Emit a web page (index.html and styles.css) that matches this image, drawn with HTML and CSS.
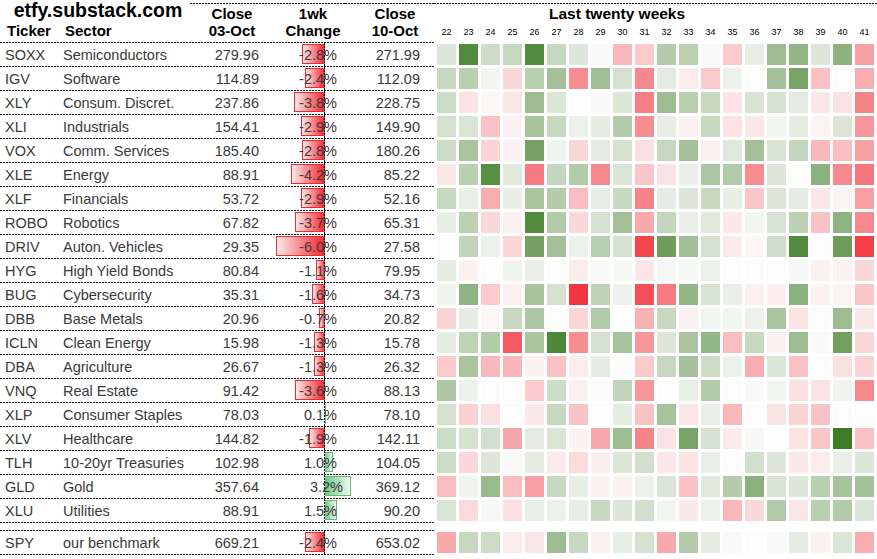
FILE: index.html
```html
<!DOCTYPE html>
<html lang="en">
<head>
<meta charset="utf-8">
<title>etfy.substack.com – sector ETFs</title>
<link rel="stylesheet" href="styles.css">
</head>
<body>
<div class="sheet">
  <div class="head">
    <div class="hleft">
      <div class="brandcol">
        <div class="brand">etfy.substack.com</div>
        <div class="sub"><span class="stk">Ticker</span><span class="ssec">Sector</span></div>
      </div>
      <div class="hc hc1">Close<br>03-Oct</div>
      <div class="hc hc2">1wk<br>Change</div>
      <div class="hc hc3">Close<br>10-Oct</div>
    </div>
    <div class="hright">
      <div class="title">Last twenty weeks</div>
      <div class="weeks"><span>22</span><span>23</span><span>24</span><span>25</span><span>26</span><span>27</span><span>28</span><span>29</span><span>30</span><span>31</span><span>32</span><span>33</span><span>34</span><span>35</span><span>36</span><span>37</span><span>38</span><span>39</span><span>40</span><span>41</span></div>
    </div>
  </div>

  <div class="row"><div class="tbl"><span class="tk">SOXX</span><span class="sec">Semiconductors</span><span class="c1">279.96</span><span class="chg" data-v="-2.8"><span class="pct">-2.8%</span></span><span class="c2">271.99</span></div><div class="heat"></div></div>
  <div class="row"><div class="tbl"><span class="tk">IGV</span><span class="sec">Software</span><span class="c1">114.89</span><span class="chg" data-v="-2.4"><span class="pct">-2.4%</span></span><span class="c2">112.09</span></div><div class="heat"></div></div>
  <div class="row"><div class="tbl"><span class="tk">XLY</span><span class="sec">Consum. Discret.</span><span class="c1">237.86</span><span class="chg" data-v="-3.8"><span class="pct">-3.8%</span></span><span class="c2">228.75</span></div><div class="heat"></div></div>
  <div class="row"><div class="tbl"><span class="tk">XLI</span><span class="sec">Industrials</span><span class="c1">154.41</span><span class="chg" data-v="-2.9"><span class="pct">-2.9%</span></span><span class="c2">149.90</span></div><div class="heat"></div></div>
  <div class="row"><div class="tbl"><span class="tk">VOX</span><span class="sec">Comm. Services</span><span class="c1">185.40</span><span class="chg" data-v="-2.8"><span class="pct">-2.8%</span></span><span class="c2">180.26</span></div><div class="heat"></div></div>
  <div class="row"><div class="tbl"><span class="tk">XLE</span><span class="sec">Energy</span><span class="c1">88.91</span><span class="chg" data-v="-4.2"><span class="pct">-4.2%</span></span><span class="c2">85.22</span></div><div class="heat"></div></div>
  <div class="row"><div class="tbl"><span class="tk">XLF</span><span class="sec">Financials</span><span class="c1">53.72</span><span class="chg" data-v="-2.9"><span class="pct">-2.9%</span></span><span class="c2">52.16</span></div><div class="heat"></div></div>
  <div class="row"><div class="tbl"><span class="tk">ROBO</span><span class="sec">Robotics</span><span class="c1">67.82</span><span class="chg" data-v="-3.7"><span class="pct">-3.7%</span></span><span class="c2">65.31</span></div><div class="heat"></div></div>
  <div class="row"><div class="tbl"><span class="tk">DRIV</span><span class="sec">Auton. Vehicles</span><span class="c1">29.35</span><span class="chg" data-v="-6.0"><span class="pct">-6.0%</span></span><span class="c2">27.58</span></div><div class="heat"></div></div>
  <div class="row"><div class="tbl"><span class="tk">HYG</span><span class="sec">High Yield Bonds</span><span class="c1">80.84</span><span class="chg" data-v="-1.1"><span class="pct">-1.1%</span></span><span class="c2">79.95</span></div><div class="heat"></div></div>
  <div class="row"><div class="tbl"><span class="tk">BUG</span><span class="sec">Cybersecurity</span><span class="c1">35.31</span><span class="chg" data-v="-1.6"><span class="pct">-1.6%</span></span><span class="c2">34.73</span></div><div class="heat"></div></div>
  <div class="row"><div class="tbl"><span class="tk">DBB</span><span class="sec">Base Metals</span><span class="c1">20.96</span><span class="chg" data-v="-0.7"><span class="pct">-0.7%</span></span><span class="c2">20.82</span></div><div class="heat"></div></div>
  <div class="row"><div class="tbl"><span class="tk">ICLN</span><span class="sec">Clean Energy</span><span class="c1">15.98</span><span class="chg" data-v="-1.3"><span class="pct">-1.3%</span></span><span class="c2">15.78</span></div><div class="heat"></div></div>
  <div class="row"><div class="tbl"><span class="tk">DBA</span><span class="sec">Agriculture</span><span class="c1">26.67</span><span class="chg" data-v="-1.3"><span class="pct">-1.3%</span></span><span class="c2">26.32</span></div><div class="heat"></div></div>
  <div class="row"><div class="tbl"><span class="tk">VNQ</span><span class="sec">Real Estate</span><span class="c1">91.42</span><span class="chg" data-v="-3.6"><span class="pct">-3.6%</span></span><span class="c2">88.13</span></div><div class="heat"></div></div>
  <div class="row"><div class="tbl"><span class="tk">XLP</span><span class="sec">Consumer Staples</span><span class="c1">78.03</span><span class="chg" data-v="0.1"><span class="pct">0.1%</span></span><span class="c2">78.10</span></div><div class="heat"></div></div>
  <div class="row"><div class="tbl"><span class="tk">XLV</span><span class="sec">Healthcare</span><span class="c1">144.82</span><span class="chg" data-v="-1.9"><span class="pct">-1.9%</span></span><span class="c2">142.11</span></div><div class="heat"></div></div>
  <div class="row"><div class="tbl"><span class="tk">TLH</span><span class="sec">10-20yr Treasuries</span><span class="c1">102.98</span><span class="chg" data-v="1.0"><span class="pct">1.0%</span></span><span class="c2">104.05</span></div><div class="heat"></div></div>
  <div class="row"><div class="tbl"><span class="tk">GLD</span><span class="sec">Gold</span><span class="c1">357.64</span><span class="chg" data-v="3.2"><span class="pct">3.2%</span></span><span class="c2">369.12</span></div><div class="heat"></div></div>
  <div class="row"><div class="tbl"><span class="tk">XLU</span><span class="sec">Utilities</span><span class="c1">88.91</span><span class="chg" data-v="1.5"><span class="pct">1.5%</span></span><span class="c2">90.20</span></div><div class="heat"></div></div>
  <div class="row spy"><div class="tbl"><span class="tk">SPY</span><span class="sec">our benchmark</span><span class="c1">669.21</span><span class="chg" data-v="-2.4"><span class="pct">-2.4%</span></span><span class="c2">653.02</span></div><div class="heat"></div></div>
</div>
<script src="script.js"></script>
</body>
</html>
```

FILE: styles.css
```css
* { box-sizing: border-box; }

html, body { margin: 0; padding: 0; background: #ffffff; }

body {
  width: 877px;
  font-family: "Liberation Sans", Arial, sans-serif;
  color: #3a3a3a;
}

.sheet { display: flex; flex-direction: column; }

/* ---------- header ---------- */
.head { display: flex; height: 43px; }

.hleft {
  width: 434px;
  display: flex;
  background: linear-gradient(to right, #111 2px, transparent 2px) left bottom / 3px 1px repeat-x;
}

.brandcol { width: 190px; color: #000; }

.brand {
  font-size: 19.5px;
  font-weight: bold;
  line-height: 20px;
  text-align: center;
  padding-left: 6px;
  white-space: nowrap;
}

.sub { display: flex; font-size: 15px; font-weight: bold; line-height: 22px; }
.stk { width: 58px; padding-left: 7px; }
.ssec { padding-left: 7px; }

.hc {
  margin-top: 3px;
  padding-top: 2px;
  font-size: 15px;
  font-weight: bold;
  line-height: 17px;
  text-align: center;
  color: #000;
  background: linear-gradient(to right, #111 2px, transparent 2px) left top / 3px 1px repeat-x;
}
.hc1 { width: 75px; padding-left: 9px; }
.hc2 { width: 80px; padding-left: 16px; }
.hc3 { width: 89px; padding-left: 11px; }

.hright {
  flex: 1;
  margin-top: 3px;
  padding-left: 3px;
  color: #000;
  background: linear-gradient(to right, #111 2px, transparent 2px) left top / 3px 1px repeat-x;
}

.title {
  padding-top: 2px;
  padding-left: 112px;
  font-size: 15.5px;
  font-weight: bold;
  line-height: 17px;
}

.weeks {
  display: flex;
  gap: 3px;
  margin-top: 3px;
  font-size: 9px;
  line-height: 15px;
}
.weeks span { width: 19px; text-align: center; }

/* ---------- rows ---------- */
.row { display: flex; height: 24px; }

.tbl {
  width: 434px;
  display: flex;
  padding-top: 1px;
  font-size: 14.5px;
  line-height: 22px;
  white-space: nowrap;
  background: linear-gradient(to right, #111 2px, transparent 2px) left bottom / 3px 1px repeat-x;
}

.tk { width: 58px; padding-left: 5px; }
.sec { width: 132px; padding-left: 5px; }
.c1 { width: 75px; padding-right: 6px; text-align: right; }
.c2 { width: 89px; padding-right: 14px; text-align: right; }

.chg { width: 80px; display: grid; margin-top: -1px; line-height: 24px; }
.chg > * { grid-area: 1 / 1; }

.bar { height: 20px; margin-top: 1px; align-self: start; }
.bar.neg {
  justify-self: end;
  margin-right: 20px;
  border: 1px solid #ec2a32;
  border-right: 0;
  background: linear-gradient(to left, #f3232b, #fde9e9);
}
.bar.pos {
  justify-self: start;
  margin-left: 60px;
  border: 1px solid #62bc76;
  border-left: 0;
  background: linear-gradient(to right, #6cc783, #eef8f0);
}

.zero {
  justify-self: start;
  margin-left: 59px;
  width: 1px;
  height: 24px;
  background: linear-gradient(to bottom, #111 2px, transparent 2px) left top / 1px 3px repeat-y;
}

.pct { justify-self: end; padding-right: 8px; padding-top: 1px; line-height: 22px; position: relative; }

.heat { display: flex; gap: 3px; padding-left: 3px; padding-top: 1px; }
.cell { width: 19px; height: 21px; }

/* ---------- benchmark row ---------- */
.row.spy { height: 25px; margin-top: 7px; }
.spy .tbl {
  padding-top: 2px;
  background:
    linear-gradient(to right, #111 2px, transparent 2px) left top / 3px 1px repeat-x,
    linear-gradient(to right, #111 2px, transparent 2px) left bottom / 3px 1px repeat-x;
}
.spy .heat { padding-top: 2px; }
.spy .zero { height: 23px; }
```

FILE: script.js
```js
var heat = [
  [1.6, 8.7, 2.4, 2.8, 8.7, 2.8, 1.6, 0.2, -3.3, -2.5, 3.7, 3.3, 0.2, -2.5, 1.1, 4.9, 5.5, 1.6, 5.7, -4.5],
  [2.8, 3.5, 0.5, -1.8, 3.5, 4.6, -5.5, 4.7, 2.1, -5.7, 1.3, -0.8, -2.5, 0.8, 0, 4.6, 6.8, -2.9, 0, -3.9],
  [2.5, -1.3, -0.3, -1.1, 4.9, 1.7, 0, 0.2, 1.7, -6.2, 4.9, 3.5, 2.7, -1.2, 1.9, 2.0, 1.3, -1.1, -1.3, -5.9],
  [2.1, 1.8, -2.8, -0.5, 4.4, 2.7, 0.8, 1.2, 3.7, -5.5, 1.1, -0.5, 2.7, -1.3, -1.1, 0.5, 1.2, -0.4, 1.7, -5.0],
  [2.5, 4.3, -2.0, -0.5, 6.9, 0.6, -1.9, 1.2, 2.0, -1.4, 2.8, 4.5, -0.6, 1.5, 4.6, 1.9, 2.9, -3.3, -3.0, -4.5],
  [-1.0, 3.5, 8.4, 1.5, -6.4, 2.9, 3.8, -5.7, 1.8, -2.6, -1.3, 1.0, 4.1, 3.8, -5.5, 1.7, 0, 5.8, -5.7, -6.7],
  [2.8, 1.0, -3.9, 1.1, 4.3, 3.7, -3.1, 1.1, 2.7, -6.0, 1.2, 1.6, 2.8, 1.1, -2.6, 1.7, 1.2, -1.1, -0.4, -4.6],
  [1.1, 3.3, -1.8, -0.6, 8.7, 3.8, -1.8, 2.1, 4.6, -4.1, 2.9, 1.0, 1.5, -1.0, 0.5, 1.9, 3.3, -2.8, 5.6, -5.7],
  [0, 3.0, 0.8, -1.9, 7.0, 4.6, 0.8, 3.5, 2.0, -9.0, 7.3, 4.7, 2.0, -0.9, -0.3, 2.3, 8.7, 0, 7.3, -9.4],
  [1.2, -0.5, 0, 0.6, 1.0, 0, -0.8, 0.2, 0.3, -1.1, 0.4, 0.3, 0.8, 0, 0, 0, 0.3, -0.5, -0.5, -1.8],
  [0.6, 5.6, -2.5, -0.6, 4.4, 2.0, -9.8, 3.2, 0.8, -8.5, -6.4, 5.4, 1.9, 1.0, -0.6, -0.7, 5.8, -0.5, -0.4, -2.6],
  [-2.0, 1.2, -0.3, 2.8, 4.0, 0, -1.9, 3.8, 0, -3.7, 2.8, -0.6, 0.5, 0.5, 0.8, 4.3, -1.3, 0, 4.9, -1.1],
  [1.2, 3.2, 3.8, -8.0, 4.3, 9.0, -5.5, 2.1, 4.4, -5.0, 1.6, 4.3, 5.4, -3.1, 2.8, -0.6, 4.9, 0.2, 7.1, -1.9],
  [-2.5, 4.3, -3.3, -3.5, -0.5, -2.8, -0.8, 1.2, 0.1, -2.5, 2.8, 4.5, 2.5, 0.8, -3.9, 1.7, -2.9, 0, -1.4, -2.0],
  [4.0, 0.8, 0, 0, -2.5, 2.5, -0.6, 0.1, 3.0, -5.0, 0, 1.0, 3.8, 0, 0.2, 0.5, -1.4, -1.3, 0.6, -5.7],
  [2.1, -2.2, -1.4, 0, -1.0, 2.8, -2.8, 0, 1.2, -2.8, 4.4, -1.1, 1.0, -3.4, 0, -1.3, -2.0, -2.8, 0, 0],
  [2.5, 2.0, 2.2, -4.3, 1.3, 1.8, -0.5, -4.1, 4.9, -5.9, -1.3, 6.8, 2.0, -0.9, 0.3, 0, -1.3, -2.7, 9.8, -2.9],
  [2.5, -1.8, 1.6, 0.2, 1.2, -0.9, -1.7, -0.7, 1.6, 2.2, -1.1, -1.3, 1.0, 0, 2.2, 1.6, -1.0, -0.8, 1.0, 1.6],
  [-3.1, 0.6, 5.1, -3.1, -4.6, 2.7, 1.1, -0.5, -0.6, 0.8, 1.8, -2.8, 1.5, 3.7, 5.8, 1.9, 1.6, 3.5, 4.4, 4.5],
  [1.8, -1.7, 0.3, -1.4, 1.0, 0.8, 1.1, 2.7, 1.6, 2.2, 0.5, -1.0, 0.8, -3.4, -1.8, 3.8, -1.1, 3.5, 3.8, 1.8],
  [-4.1, 2.8, 2.5, -0.8, -1.1, 4.9, 2.7, -0.6, 1.1, 2.0, -4.1, 3.7, 1.2, 0.2, 0, 0.2, 1.2, -0.5, 1.8, -3.9]
];

function shade(v) {
  var t = Math.min(Math.abs(v) / 10, 1);
  var base = [252, 252, 252];
  var end = v >= 0 ? [58, 122, 34] : [242, 50, 58];
  var c = base.map(function (b, i) { return Math.round(b + (end[i] - b) * t); });
  return 'rgb(' + c.join(',') + ')';
}

document.querySelectorAll('.heat').forEach(function (el, r) {
  heat[r].forEach(function (v) {
    var cell = document.createElement('span');
    cell.className = 'cell';
    cell.style.background = shade(v);
    el.appendChild(cell);
  });
});

document.querySelectorAll('.chg').forEach(function (el) {
  var v = parseFloat(el.getAttribute('data-v'));
  var bar = document.createElement('span');
  bar.className = 'bar ' + (v < 0 ? 'neg' : 'pos');
  bar.style.width = Math.max(1, Math.round(Math.abs(v) * 8.2)) + 'px';
  var zero = document.createElement('span');
  zero.className = 'zero';
  el.insertBefore(zero, el.firstChild);
  el.insertBefore(bar, el.firstChild);
});
```
